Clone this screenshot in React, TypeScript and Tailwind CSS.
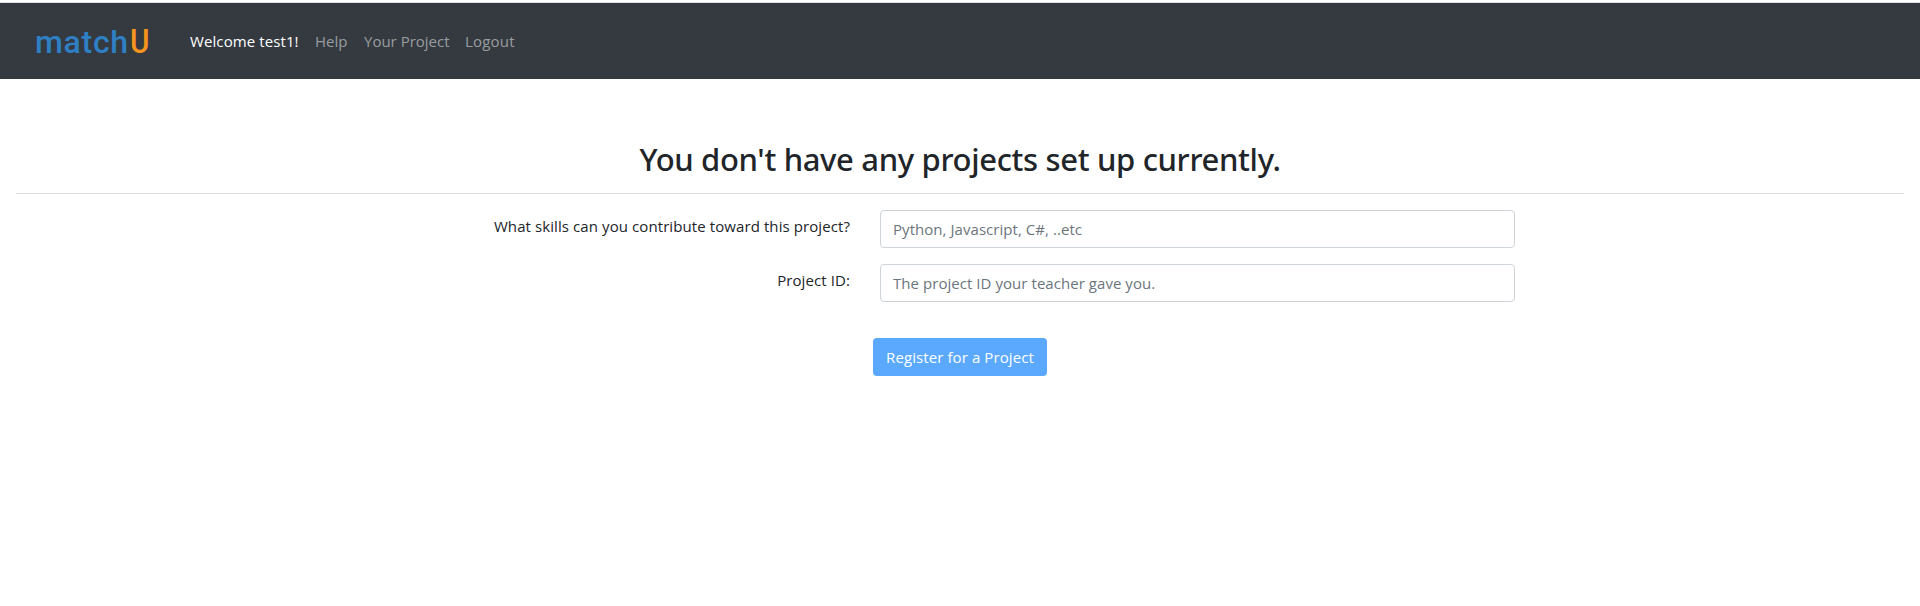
import React from "react";

const links = [
  { label: "Help", cls: "w-[33px]" },
  { label: "Your Project", cls: "w-[85px]" },
  { label: "Logout", cls: "w-[50px] tracking-[0.2px]" },
];

interface FieldProps {
  label: string;
  placeholder: string;
}

function Field({ label, placeholder }: FieldProps) {
  return (
    <div className="flex h-[38px]">
      <label className="mr-[30px] w-[850px] whitespace-nowrap pt-1 text-right tracking-[0.09px]">{label}</label>
      <input
        placeholder={placeholder}
        className="h-[38px] w-[635px] rounded border border-[#ced4da] px-3 tracking-[0.05px] placeholder:text-[#6c757d]"
      />
    </div>
  );
}

export default function App() {
  return (
    <div className="min-h-[606px] bg-white font-['Open_Sans','Noto_Sans',sans-serif] text-[15px] leading-6 text-[#212529]">
      <div className="h-[3px] border-b border-[#dee2e6]" />
      <nav className="flex h-[76px] items-start bg-[#343a40] pl-[35px] text-[#9a9da0]">
        <a className="mt-[19px] w-[155px] whitespace-nowrap font-['Roboto',sans-serif] text-[32px] leading-10 font-medium tracking-[0.7px] text-[#2f7fc4]">
          match<span className="ml-px inline-block origin-left scale-x-90 text-[33px] tracking-normal text-[#f7941d]">U</span>
        </a>
        <div className="mt-[26px] flex gap-4 whitespace-nowrap">
          <a className="w-[109px] tracking-[0.1px] text-white">Welcome test1!</a>
          {links.map((l) => (
            <a key={l.label} className={l.cls}>{l.label}</a>
          ))}
        </div>
      </nav>
      <main>
        <h2 className="pt-[61px] text-center font-['Noto_Sans','Open_Sans',sans-serif] text-[31px] leading-[38px] font-medium tracking-[-0.34px]">
          You don't have any projects set up currently.
        </h2>
        <hr className="mx-4 mt-[15px] border-[#e0e0e0]" />
        <form className="mt-4 flex flex-col gap-4">
          <Field label="What skills can you contribute toward this project?" placeholder="Python, Javascript, C#, ..etc" />
          <Field label="Project ID:" placeholder="The project ID your teacher gave you." />
          <button type="button" className="mt-5 h-[38px] w-[174px] self-center whitespace-nowrap rounded bg-[#5aa9ff] tracking-[0.09px] text-white">
            Register for a Project
          </button>
        </form>
      </main>
    </div>
  );
}
